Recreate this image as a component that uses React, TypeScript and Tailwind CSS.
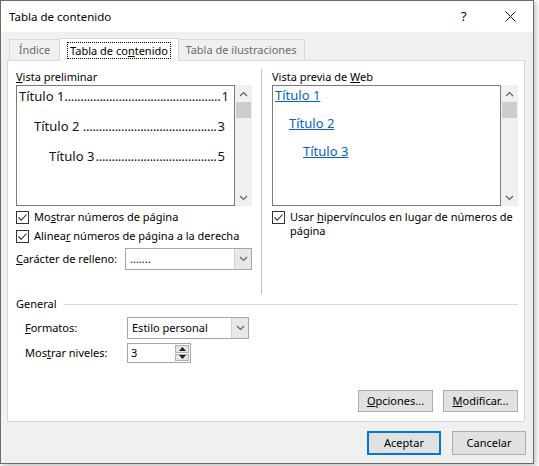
import React from 'react';

const font = { fontFamily: '"Noto Sans", "Open Sans", sans-serif' };

const Up = () => (
    <svg width="9" height="6" viewBox="0 0 9 6">
        <polyline points="1,5 4.5,1.5 8,5" fill="none" stroke="#606060" strokeWidth="1.2" />
    </svg>
);

const Down = () => (
    <svg width="9" height="6" viewBox="0 0 9 6">
        <polyline points="1,1 4.5,4.5 8,1" fill="none" stroke="#606060" strokeWidth="1.2" />
    </svg>
);

const Check = () => (
    <span className="w-[13px] h-[13px] border border-[#333] bg-white flex items-center justify-center shrink-0">
        <svg width="11" height="11" viewBox="0 0 11 11">
            <polyline points="1.5,5.5 4.2,8.3 9.5,2.5" fill="none" stroke="#222" strokeWidth="1.1" />
        </svg>
    </span>
);

const ScrollBar = () => (
    <div className="w-[17px] h-full bg-[#f0f0f0] flex flex-col items-center">
        <div className="h-[17px] flex items-center justify-center"><Up /></div>
        <div className="w-[15px] h-[16px] bg-[#cdcdcd]" />
        <div className="flex-1" />
        <div className="h-[17px] flex items-center justify-center"><Down /></div>
    </div>
);

const Combo = ({ value, width }: { value: string; width: string }) => (
    <div className={`${width} h-full border border-[#a6a6a6] bg-white flex`}>
        <span className="flex-1 pl-[4px] flex items-center">{value}</span>
        <span className="w-[17px] border-l border-[#d0d0d0] bg-[#e8e8e8] flex items-center justify-center">
            <Down />
        </span>
    </div>
);

// dot leader line of the TOC preview
const TocLine = ({ label, page, indent, dots }: { label: string; page: string; indent: string; dots: number }) => (
    <div className={`flex h-[18px] items-center text-[13px] pr-[9px] ${indent}`}>
        <span className="whitespace-nowrap">{label}</span>
        <span className="flex-1 whitespace-nowrap text-right tracking-[-0.3px] pr-[1px]">{'.'.repeat(dots)}</span>
        <span>{page}</span>
    </div>
);

const Btn = ({ children, width, primary }: { children: React.ReactNode; width: string; primary?: boolean }) => (
    <button
        className={`${width} flex items-center justify-center bg-[#e1e1e1] ${primary ? 'border-2 border-[#0078d7]' : 'border border-[#adadad]'}`}
    >
        {children}
    </button>
);

export default function App() {
    return (
        <div className="w-[539px] h-[466px] bg-white text-[11px] text-black" style={font}>
            <div className="w-[534px] h-[464px] border border-[#6b6b6b] bg-[#f0f0f0] flex flex-col shadow-[2px_2px_5px_rgba(0,0,0,0.25)]">
                {/* Title bar */}
                <div className="h-[31px] bg-white flex items-center pl-[8px] shrink-0">
                    <span className="flex-1 text-[11.5px]">Tabla de contenido</span>
                    <span className="text-[13px] w-[20px] mr-[24px]">?</span>
                    <svg width="11" height="11" viewBox="0 0 11 11" className="mr-[17px]">
                        <path d="M0.5 0.5 L10.5 10.5 M10.5 0.5 L0.5 10.5" stroke="#111" strokeWidth="1" />
                    </svg>
                </div>

                <div className="px-[6px] flex flex-col">
                    {/* Tabs */}
                    <div className="h-[29px] flex items-end pl-[2px] relative z-10 -mb-px">
                        <div className="h-[21px] w-[51px] border border-b-0 border-[#d9d9d9] flex items-center justify-center text-[#6d6d6d] mb-px">
                            Índice
                        </div>
                        <div className="h-[23px] w-[120px] -mx-px border border-b-0 border-[#d9d9d9] bg-white flex items-center justify-center">
                            <span className="border border-dotted border-black px-[2px] leading-[15px]">
                                Tabla de co<u>n</u>tenido
                            </span>
                        </div>
                        <div className="h-[21px] w-[127px] border border-b-0 border-l-0 border-[#d9d9d9] flex items-center justify-center text-[#6d6d6d] mb-px">
                            Tabla de ilustraciones
                        </div>
                    </div>

                    {/* Panel */}
                    <div className="w-[518px] h-[362px] border border-[#d9d9d9] bg-white flex flex-col">
                        <div className="flex pl-[8px]">
                            {/* Left column */}
                            <div className="w-[236px] flex flex-col">
                                <div className="mt-[8px] h-[16px] leading-[16px]"><u>V</u>ista preliminar</div>
                                <div className="h-[121px] flex">
                                    <div className="w-[219px] border border-[#7a7a7a] bg-white flex flex-col gap-[12px] pt-[2px] text-[#111]">
                                        <TocLine label="Título 1" page="1" indent="pl-[2px]" dots={49} />
                                        <TocLine label="Título 2 " page="3" indent="pl-[17px]" dots={42} />
                                        <TocLine label="Título 3" page="5" indent="pl-[32px]" dots={38} />
                                    </div>
                                    <ScrollBar />
                                </div>
                                <div className="mt-[2px] h-[19px] flex items-center gap-[5px]">
                                    <Check />
                                    <span>Mo<u>s</u>trar números de página</span>
                                </div>
                                <div className="h-[19px] flex items-center gap-[5px]">
                                    <Check />
                                    <span>Alinea<u>r</u> números de página a la derecha</span>
                                </div>
                                <div className="mt-[2px] h-[22px] flex items-center">
                                    <span className="flex-1"><u>C</u>arácter de relleno:</span>
                                    <Combo value="......." width="w-[127px]" />
                                </div>
                            </div>

                            {/* Separator */}
                            <div className="ml-[9px] mt-[8px] w-px h-[225px] bg-[#c4c4c4]" />

                            {/* Right column */}
                            <div className="ml-[10px] w-[246px] flex flex-col">
                                <div className="mt-[8px] h-[16px] leading-[16px]">Vista previa de <u>W</u>eb</div>
                                <div className="h-[121px] flex">
                                    <div className="w-[229px] border border-[#7a7a7a] bg-white flex flex-col gap-[10px] text-[13px] text-[#0563c1]">
                                        <div className="h-[18px] leading-[18px] pl-[2px]"><u>Título 1</u></div>
                                        <div className="h-[18px] leading-[18px] pl-[16px]"><u>Título 2</u></div>
                                        <div className="h-[18px] leading-[18px] pl-[30px]"><u>Título 3</u></div>
                                    </div>
                                    <ScrollBar />
                                </div>
                                <div className="mt-[5px] flex items-start gap-[5px]">
                                    <Check />
                                    <span className="leading-[14px] -mt-[1px]">
                                        Usar <span className="underline">h</span>ipervínculos en lugar de números de página
                                    </span>
                                </div>
                            </div>
                        </div>

                        {/* General */}
                        <div className="mt-[2px] h-[16px] flex items-center pl-[8px] pr-[6px]">
                            <span>General</span>
                            <span className="flex-1 h-px bg-[#dcdcdc] ml-[7px]" />
                        </div>
                        <div className="mt-[5px] h-[22px] flex items-center pl-[17px]">
                            <span className="w-[102px]"><u>F</u>ormatos:</span>
                            <Combo value="Estilo personal" width="w-[122px]" />
                        </div>
                        <div className="mt-[4px] h-[20px] flex items-center pl-[17px]">
                            <span className="w-[102px]">Mos<u>t</u>rar niveles:</span>
                            <div className="w-[64px] h-full border border-[#a6a6a6] bg-white flex">
                                <span className="flex-1 pl-[3px] flex items-center">3</span>
                                <span className="w-[16px] flex flex-col p-px gap-px">
                                    <span className="flex-1 bg-[#e5e5e5] border border-[#b0b0b0] flex items-center justify-center">
                                        <svg width="7" height="4" viewBox="0 0 7 4"><polygon points="0,4 3.5,0 7,4" fill="#222" /></svg>
                                    </span>
                                    <span className="flex-1 bg-[#e5e5e5] border border-[#b0b0b0] flex items-center justify-center">
                                        <svg width="7" height="4" viewBox="0 0 7 4"><polygon points="0,0 3.5,4 7,0" fill="#222" /></svg>
                                    </span>
                                </span>
                            </div>
                        </div>

                        <div className="mt-auto mb-[9px] flex justify-end gap-[10px] pr-[6px] h-[22px]">
                            <Btn width="w-[75px]"><span><u>O</u>pciones...</span></Btn>
                            <Btn width="w-[75px]"><span><u>M</u>odificar...</span></Btn>
                        </div>
                    </div>

                    {/* Dialog buttons */}
                    <div className="mt-[9px] h-[24px] flex justify-end gap-[11px] pr-[1px]">
                        <Btn width="w-[74px]" primary>Aceptar</Btn>
                        <Btn width="w-[74px]">Cancelar</Btn>
                    </div>
                </div>
            </div>
        </div>
    );
}
